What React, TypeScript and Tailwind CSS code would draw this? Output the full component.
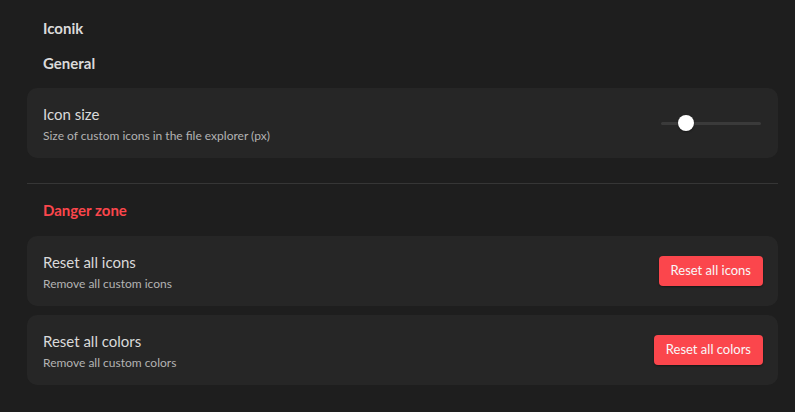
import React from "react";

function Card({ title, desc, children }: { title: string; desc: string; children: React.ReactNode }) {
  return (
    <div className="flex h-[70px] items-center justify-between rounded-[10px] bg-[#262626] pl-4 pr-[15px]">
      <div className="flex flex-col pt-[2px]">
        <div className="text-[15px] leading-[20px] text-[#dadada]">{title}</div>
        <div className="mt-[4px] text-[12px] leading-[16px] text-[#b3b3b3]">{desc}</div>
      </div>
      {children}
    </div>
  );
}

function DangerButton({ label }: { label: string }) {
  return (
    <button className="h-[30px] rounded-[4px] bg-[#fb464c] px-3 text-[13px] text-[#f8f8f8] shadow-[0_1px_2px_rgba(0,0,0,0.4)]">
      {label}
    </button>
  );
}

export default function App() {
  return (
    <div
      className="h-[412px] w-[795px] bg-[#1e1e1e] px-[27px] pr-[17px]"
      style={{ fontFamily: 'Lato, "Noto Sans", sans-serif' }}
    >
      <div className="pl-4 pt-[17px] text-[15px] font-bold leading-[22px] text-[#dadada]">Iconik</div>
      <div className="mt-[13px] pl-4 text-[15px] font-bold leading-[22px] text-[#dadada]">General</div>
      <div className="mt-[14px]">
        <Card title="Icon size" desc="Size of custom icons in the file explorer (px)">
          <div className="relative mr-[2px] flex h-4 w-[100px] items-center">
            <div className="h-[3px] w-full rounded-full bg-[#3a3a3a]" />
            <div className="absolute left-[17px] top-0 h-4 w-4 rounded-full bg-white shadow-[0_1px_2px_rgba(0,0,0,0.4)]" />
          </div>
        </Card>
      </div>
      <div className="mt-[25px] h-px bg-[#363636]" />
      <div className="mt-[15px] pl-4 text-[15px] font-bold leading-[22px] text-[#fb464c]">Danger zone</div>
      <div className="mt-[15px] flex flex-col gap-[9px]">
        <Card title="Reset all icons" desc="Remove all custom icons">
          <DangerButton label="Reset all icons" />
        </Card>
        <Card title="Reset all colors" desc="Remove all custom colors">
          <DangerButton label="Reset all colors" />
        </Card>
      </div>
    </div>
  );
}
